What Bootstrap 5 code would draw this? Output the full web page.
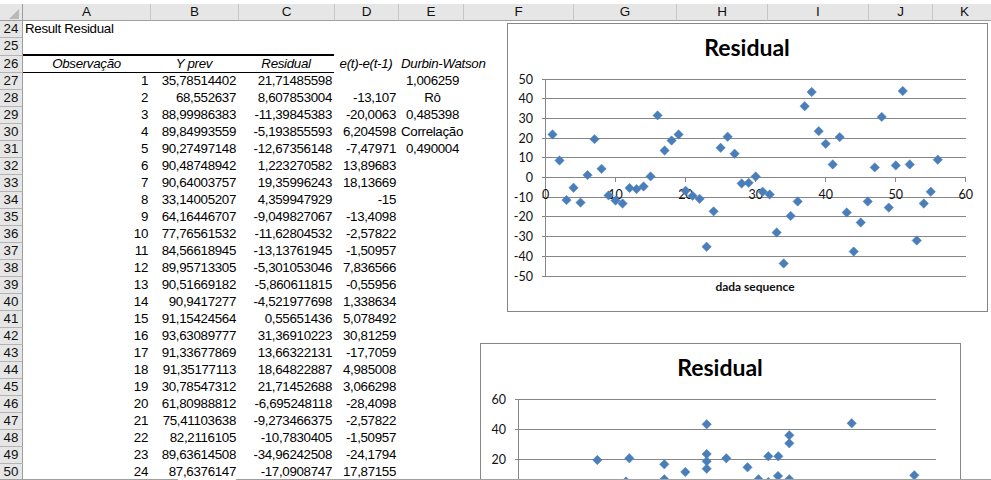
<!DOCTYPE html>
<html lang="pt">
<head>
<meta charset="utf-8">
<title>Result Residual</title>
<link href="https://cdn.jsdelivr.net/npm/bootstrap@5.3.0/dist/css/bootstrap.min.css" rel="stylesheet">
<style>
html,body{margin:0;background:#fff;overflow:hidden}
.xl-window{position:relative;width:991px;height:480px;overflow:hidden;padding-top:4px;background:#fff}
.xl-grid.table{width:996px;table-layout:fixed;border-collapse:separate;border-spacing:0;margin:0;font:13.33px/16px "Liberation Sans",Arial,sans-serif;letter-spacing:-.32px;color:#000}
.xl-grid.table>:not(caption)>*>*{padding:0 2px;height:17px;white-space:nowrap;overflow:visible;vertical-align:top;background:transparent;box-shadow:none;font-weight:400;color:#000;text-align:right}
.xl-grid.table>thead>tr>th{background:#e6e6e6;text-align:center;padding:0;border-bottom:1px solid #9e9e9e;border-left:1px solid #c6c6c6;color:#111;letter-spacing:0;font-size:13.5px}
.xl-grid.table>tbody>tr>th{background:#e6e6e6;text-align:center;padding:0;border-bottom:1px solid #b4b4b4;border-right:1px solid #9e9e9e;color:#111;letter-spacing:0}
.xl-grid.table>thead>tr>th.xl-corner{position:relative;border-left:0;border-right:1px solid #9e9e9e}
.xl-grid.table>thead>tr>th.xl-nolead{border-left:0}
.xl-corner svg{position:absolute;left:9px;top:5px}
.xl-grid.table>tbody>tr>td.xl-left{text-align:left;padding-left:2px}
.xl-grid.table>tbody>tr>td.xl-mid{text-align:center;padding:0 0 0 4px}
.xl-grid.table>tbody>tr>td.xl-dw{text-align:left;padding-left:3px}
.xl-grid.table>tbody>tr>td.xl-head{text-align:center;font-style:italic;border-bottom:1px solid #000}
.xl-grid.table>tbody>tr>td.xl-head-plain{text-align:center;font-style:italic;border:0}
.xl-grid.table>tbody>tr.xl-r25>*{height:18px}
.xl-grid.table>tbody>tr.xl-r25>td.xl-thick{border-bottom:2px solid #000}
.xl-chart{position:absolute;background:#fff;border:1px solid #868686;box-sizing:border-box;z-index:2}
.xl-c1{left:507px;top:23px;width:481px;height:289px}
.xl-c2{left:480px;top:343px;width:481px;height:137px;border-bottom:0}
.xl-chart svg{display:block;position:absolute;left:-1px;top:-1px}
.xl-title{font:700 23px "Lato",sans-serif;fill:#000;text-anchor:middle}
.xl-tick{font:400 12.5px "Lato",sans-serif;fill:#111}
.xl-end{text-anchor:end}
.xl-mid-t{text-anchor:middle}
.xl-axis-t{font:700 12px "Lato",sans-serif;fill:#111;text-anchor:middle}
.xl-line{stroke:#868686;stroke-width:1;shape-rendering:crispEdges;fill:none}
.xl-pt{fill:#4a7ebb;stroke:#4f81bd;stroke-width:.5}
.xl-edge{position:absolute;left:0;right:0;top:479px;height:1px;z-index:3;background:linear-gradient(to right,#a0a0a0 178px,#fff 178px,#fff 236px,#a0a0a0 236px)}
</style>
</head>
<body>
<div class="xl-window">
<table class="table table-borderless xl-grid">
<colgroup><col style="width:23px"><col style="width:127px"><col style="width:88px"><col style="width:96px"><col style="width:64px"><col style="width:65px"><col style="width:110px"><col style="width:103px"><col style="width:91px"><col style="width:101px"><col style="width:64px"><col style="width:64px"></colgroup>
<thead><tr><th class="xl-corner"><svg width="11" height="11" viewBox="0 0 11 11"><polygon points="10,0 10,10 0,10" fill="#b9b9b9"/></svg></th><th class="xl-nolead">A</th><th>B</th><th>C</th><th>D</th><th>E</th><th>F</th><th>G</th><th>H</th><th>I</th><th>J</th><th>K</th></tr></thead>
<tbody>
<tr><th>24</th><td class="xl-left">Result Residual</td><td></td><td></td><td></td><td></td></tr>
<tr class="xl-r25"><th>25</th><td class="xl-thick"></td><td class="xl-thick"></td><td class="xl-thick"></td><td></td><td></td></tr>
<tr><th>26</th><td class="xl-head">Observação</td><td class="xl-head">Y prev</td><td class="xl-head">Residual</td><td class="xl-head-plain">e(t)-e(t-1)</td><td class="xl-dw"><i>Durbin-Watson</i></td></tr>
<tr><th>27</th><td>1</td><td>35,78514402</td><td>21,71485598</td><td></td><td class="xl-mid">1,006259</td></tr>
<tr><th>28</th><td>2</td><td>68,552637</td><td>8,607853004</td><td>-13,107</td><td class="xl-mid">Rô</td></tr>
<tr><th>29</th><td>3</td><td>88,99986383</td><td>-11,39845383</td><td>-20,0063</td><td class="xl-mid">0,485398</td></tr>
<tr><th>30</th><td>4</td><td>89,84993559</td><td>-5,193855593</td><td>6,204598</td><td class="xl-dw">Correlação</td></tr>
<tr><th>31</th><td>5</td><td>90,27497148</td><td>-12,67356148</td><td>-7,47971</td><td class="xl-mid">0,490004</td></tr>
<tr><th>32</th><td>6</td><td>90,48748942</td><td>1,223270582</td><td>13,89683</td><td></td></tr>
<tr><th>33</th><td>7</td><td>90,64003757</td><td>19,35996243</td><td>18,13669</td><td></td></tr>
<tr><th>34</th><td>8</td><td>33,14005207</td><td>4,359947929</td><td>-15</td><td></td></tr>
<tr><th>35</th><td>9</td><td>64,16446707</td><td>-9,049827067</td><td>-13,4098</td><td></td></tr>
<tr><th>36</th><td>10</td><td>77,76561532</td><td>-11,62804532</td><td>-2,57822</td><td></td></tr>
<tr><th>37</th><td>11</td><td>84,56618945</td><td>-13,13761945</td><td>-1,50957</td><td></td></tr>
<tr><th>38</th><td>12</td><td>89,95713305</td><td>-5,301053046</td><td>7,836566</td><td></td></tr>
<tr><th>39</th><td>13</td><td>90,51669182</td><td>-5,860611815</td><td>-0,55956</td><td></td></tr>
<tr><th>40</th><td>14</td><td>90,9417277</td><td>-4,521977698</td><td>1,338634</td><td></td></tr>
<tr><th>41</th><td>15</td><td>91,15424564</td><td>0,55651436</td><td>5,078492</td><td></td></tr>
<tr><th>42</th><td>16</td><td>93,63089777</td><td>31,36910223</td><td>30,81259</td><td></td></tr>
<tr><th>43</th><td>17</td><td>91,33677869</td><td>13,66322131</td><td>-17,7059</td><td></td></tr>
<tr><th>44</th><td>18</td><td>91,35177113</td><td>18,64822887</td><td>4,985008</td><td></td></tr>
<tr><th>45</th><td>19</td><td>30,78547312</td><td>21,71452688</td><td>3,066298</td><td></td></tr>
<tr><th>46</th><td>20</td><td>61,80988812</td><td>-6,695248118</td><td>-28,4098</td><td></td></tr>
<tr><th>47</th><td>21</td><td>75,41103638</td><td>-9,273466375</td><td>-2,57822</td><td></td></tr>
<tr><th>48</th><td>22</td><td>82,2116105</td><td>-10,7830405</td><td>-1,50957</td><td></td></tr>
<tr><th>49</th><td>23</td><td>89,63614508</td><td>-34,96242508</td><td>-24,1794</td><td></td></tr>
<tr><th>50</th><td>24</td><td>87,6376147</td><td>-17,0908747</td><td>17,87155</td><td></td></tr>
</tbody>
</table>

<div class="xl-chart xl-c1">
<svg id="c1" width="481" height="289" viewBox="507 23 481 289">
<text class="xl-title" x="747" y="56">Residual</text>
<text class="xl-axis-t" x="755" y="291">dada sequence</text>
</svg>
</div>
<div class="xl-chart xl-c2">
<svg id="c2" width="481" height="137" viewBox="480 343 481 137">
<text class="xl-title" x="720" y="376">Residual</text>
</svg>
</div>
<div class="xl-edge"></div>
</div>

<script src="https://cdn.jsdelivr.net/npm/bootstrap@5.3.0/dist/js/bootstrap.bundle.min.js"></script>
<script>
(function(){
  var NS='http://www.w3.org/2000/svg';
  function add(svg,tag,attrs,txt){var e=document.createElementNS(NS,tag);for(var k in attrs)e.setAttribute(k,attrs[k]);if(txt!==undefined)e.textContent=txt;svg.appendChild(e);return e;}
  function line(svg,x1,y1,x2,y2){add(svg,'line',{x1:x1,y1:y1,x2:x2,y2:y2,'class':'xl-line'});}
  function pt(svg,x,y){var r=4.7;add(svg,'polygon',{'class':'xl-pt',points:[x,y-r,x+r,y,x,y+r,x-r,y].join(' ')});}

  var s1=document.getElementById('c1'),X0=545.5,XS=7.005,Y0=177.5,YS=1.98;
  [[50,79],[40,98],[30,118],[20,138],[10,157],[0,177],[-10,197],[-20,216],[-30,236],[-40,256],[-50,276]].forEach(function(g){
    var y=g[1]+.5;
    line(s1,X0-4,y,965.5,y);
    add(s1,'text',{'class':'xl-tick xl-end',x:533,y:y+4.5},String(g[0]));});
  line(s1,X0,79,X0,277);
  for(var t=0;t<=60;t+=10){var x=X0+t*XS;
    line(s1,x,177.5,x,182);
    add(s1,'text',{'class':'xl-tick xl-mid-t',x:x,y:199},String(t));}
  var r=[21.71,8.61,-11.4,-5.19,-12.67,1.22,19.36,4.36,-9.05,-11.63,-13.14,-5.3,-5.86,-4.52,.56,31.37,13.66,18.65,21.71,-6.7,-9.27,-10.78,-34.96,-17.09,15,20.6,12,-3,-2.7,.5,-7.2,-8.6,-27.8,-43.4,-19.4,-12.1,36,43.2,23.4,17,6.6,20.4,-17.7,-37.4,-22.7,-12.1,5.1,30.6,-15.2,6.1,43.7,6.6,-31.8,-13.1,-7.2,9];
  r.forEach(function(v,i){pt(s1,X0+(i+1)*XS,Y0-v*YS);});

  var s2=document.getElementById('c2'),A=518.5;
  [[60,399.5],[40,429.5],[20,459.5]].forEach(function(g){
    line(s2,A-4,g[1],936,g[1]);
    add(s2,'text',{'class':'xl-tick xl-end',x:506,y:g[1]+4.5},String(g[0]));});
  line(s2,A,399,A,480);
  [[597.3,460],[629.3,458.3],[664.3,464.3],[685.3,472],[706.7,454],[706.7,461.3],[706.7,468.7],[726.3,458.3],[747.5,467.3],[768.3,456.3],[778.3,456.3],[626,481.5],[664.3,479.3],[758.5,479.3],[778,476],[768.3,482],[789.3,479.3],[914.3,475.3],[706.7,424.3],[851.7,423.3],[789.3,435.3],[789.3,443.3]].forEach(function(p){pt(s2,p[0],p[1]);});
})();
</script>
</body>
</html>
